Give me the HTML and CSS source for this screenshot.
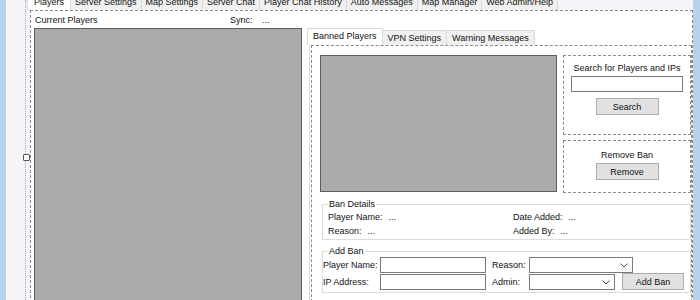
FILE: index.html
```html
<!DOCTYPE html>
<html lang="en">
<head>
    <meta charset="UTF-8">
    <meta name="viewport" content="width=device-width, initial-scale=1.0">
    <title>Server Manager - Designer</title>
    <link rel="stylesheet" href="styles.css">
</head>
<body>
    <div class="edge"></div>
    <div class="surface">
        <div class="main-tabs">
            <div class="tabstrip main-strip">
                <div class="tab active">Players</div>
                <div class="tab">Server Settings</div>
                <div class="tab">Map Settings</div>
                <div class="tab">Server Chat</div>
                <div class="tab">Player Chat History</div>
                <div class="tab">Auto Messages</div>
                <div class="tab">Map Manager</div>
                <div class="tab">Web Admin/Help</div>
            </div>
            <div class="main-page">
                <div class="players-col">
                    <div class="players-head">
                        <span>Current Players</span>
                        <span>Sync:</span>
                        <span>...</span>
                    </div>
                    <div class="listbox"></div>
                </div>

                <div class="bans-col">
                    <div class="tabstrip sub-strip">
                        <div class="tab active">Banned Players</div>
                        <div class="tab">VPN Settings</div>
                        <div class="tab">Warning Messages</div>
                    </div>
                    <div class="sub-panel">
                        <div class="sub-page">
                            <div class="top-row">
                                <div class="listbox ban-list"></div>
                                <div class="side">
                                    <div class="box search-box">
                                        <div class="box-title">Search for Players and IPs</div>
                                        <div class="textbox wide"></div>
                                        <button class="btn">Search</button>
                                    </div>
                                    <div class="box remove-box">
                                        <div class="box-title">Remove Ban</div>
                                        <button class="btn">Remove</button>
                                    </div>
                                </div>
                            </div>

                            <fieldset class="group details">
                                <legend>Ban Details</legend>
                                <div class="details-grid">
                                    <div>Player Name:<span class="val">...</span></div>
                                    <div>Date Added:<span class="val">...</span></div>
                                    <div>Reason:<span class="val">...</span></div>
                                    <div>Added By:<span class="val">...</span></div>
                                </div>
                            </fieldset>

                            <fieldset class="group add">
                                <legend>Add Ban</legend>
                                <div class="add-grid">
                                    <label>Player Name:</label>
                                    <div class="textbox"></div>
                                    <label class="second">Reason:</label>
                                    <div class="combo reason">
                                        <svg width="8" height="5" viewBox="0 0 8 5"><polyline points="0.5,0.5 4,4 7.5,0.5" fill="none" stroke="#444" stroke-width="1"/></svg>
                                    </div>

                                    <label>IP Address:</label>
                                    <div class="textbox"></div>
                                    <label class="second">Admin:</label>
                                    <div class="admin-row">
                                        <div class="combo admin">
                                            <svg width="8" height="5" viewBox="0 0 8 5"><polyline points="0.5,0.5 4,4 7.5,0.5" fill="none" stroke="#444" stroke-width="1"/></svg>
                                        </div>
                                        <button class="btn add-btn">Add Ban</button>
                                    </div>
                                </div>
                            </fieldset>
                        </div>
                    </div>
                </div>
            </div>
        </div>
        <span class="handle"></span>
    </div>
    <div class="edge right"></div>
</body>
</html>
```

FILE: styles.css
```css
body {
    margin: 0;
    width: 700px;
    height: 300px;
    overflow: hidden;
    display: flex;
    font-family: "Liberation Sans", Arial, sans-serif;
    font-size: 9px;
    color: #111;
    background-color: #f6f4f8;
}
.edge {
    width: 6px;
    background-color: #b9d1ea;
}
.edge.right {
    width: 7px;
}
.surface {
    flex: 1;
    position: relative;
    display: flex;
    padding-left: 19px;
}
.main-tabs {
    flex: 1;
    display: flex;
    flex-direction: column;
    padding-left: 4px;
    border-left: 1px dotted #a8a8a8;
}
.tabstrip {
    display: flex;
    align-items: flex-end;
}
.tab {
    padding: 0 4px;
    border: 1px solid #d9d9d9;
    border-bottom: none;
    background-color: #f0f0f0;
    white-space: nowrap;
}
.tab + .tab {
    border-left: none;
}
.tab.active {
    background-color: #fff;
}
.main-strip {
    height: 10px;
    margin-left: -3px;
}
.main-strip .tab {
    height: 14px;
    line-height: 13px;
}
.main-strip .tab.active {
    padding: 0 6px;
}
.main-page {
    height: 310px;
    display: flex;
    gap: 7px;
    padding-left: 3px;
    background-color: #fff;
    border: 1px dashed #8a8a8a;
}
.players-col {
    width: 268px;
    display: flex;
    flex-direction: column;
}
.players-head {
    height: 17px;
    line-height: 18px;
    padding-left: 1px;
    display: grid;
    grid-template-columns: 195px 32px auto;
}
.listbox {
    flex: 1;
    background-color: #abaaac;
    border: 1px solid #5c5c5c;
}
.bans-col {
    flex: 1;
    display: flex;
    flex-direction: column;
    padding-top: 17px;
}
.sub-strip {
    height: 17px;
    margin-left: -2px;
}
.sub-strip .tab {
    height: 14px;
    line-height: 14px;
    padding: 0 5px;
}
.sub-strip .tab.active {
    height: 16px;
    line-height: 15px;
}
.sub-panel {
    border-left: 1px solid #dadada;
    padding-left: 1px;
}
.sub-page {
    height: 251px;
    padding: 9px 0 0 8px;
    border: 1px dashed #8a8a8a;
}
.top-row {
    display: flex;
    gap: 6px;
}
.ban-list {
    flex: none;
    width: 235px;
    height: 135px;
}
.side {
    flex: 1;
    display: flex;
    flex-direction: column;
    gap: 5px;
}
.box {
    border: 1px dashed #8a8a8a;
    display: flex;
    flex-direction: column;
    align-items: center;
}
.box-title {
    line-height: 11px;
}
.search-box {
    height: 71px;
    padding-top: 7px;
}
.remove-box {
    height: 42px;
    padding-top: 9px;
}
.textbox {
    height: 14px;
    border: 1px solid #7a7a7a;
    background-color: #fff;
}
.textbox.wide {
    width: 110px;
    margin-top: 2px;
}
.btn {
    width: 63px;
    height: 17px;
    padding: 0;
    font-family: inherit;
    font-size: 9px;
    color: #111;
    background-color: #e1e1e1;
    border: 1px solid #adadad;
}
.search-box .btn {
    margin-top: 6px;
}
.remove-box .btn {
    margin-top: 2px;
}
.group {
    margin: 0;
    border: 1px solid #dcdcdc;
    padding: 0 0 0 5px;
    margin-left: 2px;
}
.group legend {
    padding: 0 1px;
    line-height: 11px;
}
.details {
    margin-top: 6px;
    padding-bottom: 1px;
}
.details-grid {
    display: grid;
    grid-template-columns: 185px 1fr;
    grid-auto-rows: 14px;
    line-height: 14px;
}
.val {
    margin-left: 6px;
}
.add {
    margin-top: 6px;
    padding: 0 0 2px 0;
}
.add legend {
    margin-left: 5px;
}
.add-grid {
    display: grid;
    grid-template-columns: 57px 106px 43px 155px;
    grid-auto-rows: 16px;
    row-gap: 1px;
    align-items: center;
}
.add-grid .textbox {
    height: 14px;
}
.add-grid .second {
    padding-left: 6px;
}
.combo {
    height: 14px;
    border: 1px solid #7a7a7a;
    background-color: #fff;
    display: flex;
    align-items: center;
    justify-content: flex-end;
    padding-right: 4px;
}
.combo.reason {
    width: 98px;
}
.admin-row {
    display: flex;
    align-items: center;
}
.combo.admin {
    width: 80px;
}
.add-btn {
    width: 62px;
    margin-left: 7px;
    margin-top: -1px;
}
.handle {
    position: absolute;
    left: 17px;
    top: 154px;
    width: 5px;
    height: 5px;
    background-color: #fff;
    border: 1px solid #5a5a5a;
    border-radius: 1px;
}
```
